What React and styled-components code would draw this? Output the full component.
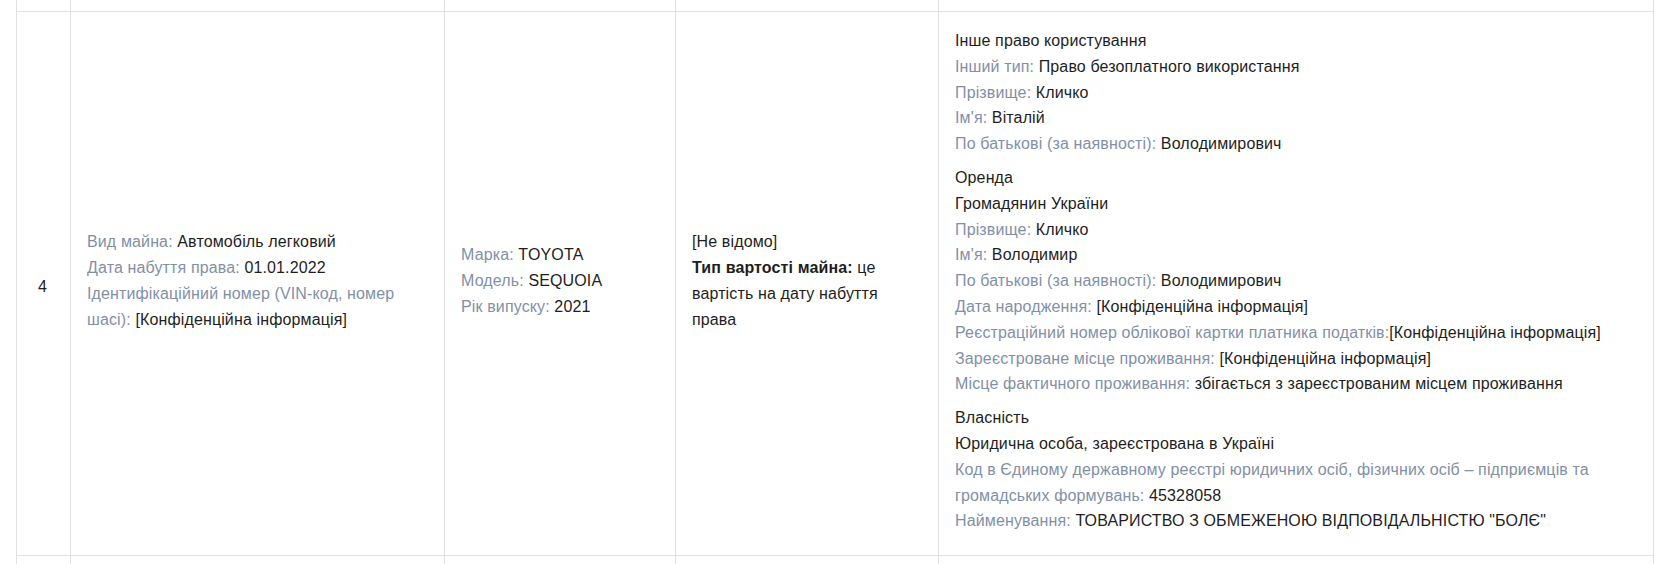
import React from "react";
import styled, { createGlobalStyle } from "styled-components";

const GlobalStyle = createGlobalStyle`
  html, body {
    margin: 0;
    padding: 0;
    background: #fff;
  }
  body {
    font-family: "Liberation Sans", Arial, sans-serif;
    font-size: 16px;
    color: #1e1e1e;
    overflow: hidden;
  }
`;

const columns = [54, 374, 231, 263, 715];

const rightsGroups = [
  [
    { value: "Інше право користування" },
    { label: "Інший тип:", value: "Право безоплатного використання" },
    { label: "Прізвище:", value: "Кличко" },
    { label: "Ім'я:", value: "Віталій" },
    { label: "По батькові (за наявності):", value: "Володимирович" }
  ],
  [
    { value: "Оренда" },
    { value: "Громадянин України" },
    { label: "Прізвище:", value: "Кличко" },
    { label: "Ім'я:", value: "Володимир" },
    { label: "По батькові (за наявності):", value: "Володимирович" },
    { label: "Дата народження:", value: "[Конфіденційна інформація]" },
    {
      label: "Реєстраційний номер облікової картки платника податків:",
      value: "[Конфіденційна інформація]",
      tight: true
    },
    { label: "Зареєстроване місце проживання:", value: "[Конфіденційна інформація]" },
    {
      label: "Місце фактичного проживання:",
      value: "збігається з зареєстрованим місцем проживання"
    }
  ],
  [
    { value: "Власність" },
    { value: "Юридична особа, зареєстрована в Україні" },
    {
      label:
        "Код в Єдиному державному реєстрі юридичних осіб, фізичних осіб – підприємців та громадських формувань:",
      value: "45328058"
    },
    {
      label: "Найменування:",
      value: 'ТОВАРИСТВО З ОБМЕЖЕНОЮ ВІДПОВІДАЛЬНІСТЮ "БОЛЄ"'
    }
  ]
];

const Field = ({ label, value, tight }) => (
  <Line>
    {label && <Label>{label}</Label>}
    {label && !tight ? " " : ""}
    {value}
  </Line>
);

function App() {
  return (
    <Page>
      <GlobalStyle />
      <Table>
        <colgroup>
          {columns.map((w, i) => (
            <col key={i} style={{ width: w }} />
          ))}
        </colgroup>
        <tbody>
          <tr>
            {columns.map((_, i) => (
              <Cell key={i} $empty>
                <Spacer />
              </Cell>
            ))}
          </tr>
          <tr>
            <Cell $center>4</Cell>
            <Cell>
              <Field label="Вид майна:" value="Автомобіль легковий" />
              <Field label="Дата набуття права:" value="01.01.2022" />
              <Field
                label="Ідентифікаційний номер (VIN-код, номер шасі):"
                value="[Конфіденційна інформація]"
              />
            </Cell>
            <Cell>
              <Field label="Марка:" value="TOYOTA" />
              <Field label="Модель:" value="SEQUOIA" />
              <Field label="Рік випуску:" value="2021" />
            </Cell>
            <Cell>
              <Line>[Не відомо]</Line>
              <Line>
                <Strong>Тип вартості майна:</Strong> це вартість на дату
                набуття права
              </Line>
            </Cell>
            <Cell>
              {rightsGroups.map((group, i) => (
                <Group key={i}>
                  {group.map((f, j) => (
                    <Field key={j} {...f} />
                  ))}
                </Group>
              ))}
            </Cell>
          </tr>
          <tr>
            {columns.map((_, i) => (
              <Cell key={i} $empty>
                <Spacer />
              </Cell>
            ))}
          </tr>
        </tbody>
      </Table>
    </Page>
  );
}

const Page = styled.div`
  padding-left: 16px;
  height: 564px;
  overflow: hidden;
`;

const Table = styled.table`
  width: 1638px;
  table-layout: fixed;
  border-collapse: separate;
  border-spacing: 0;
  border-left: 1px solid #e0e1e5;
`;

const Cell = styled.td`
  box-sizing: border-box;
  border-right: 1px solid #e0e1e5;
  border-bottom: 1px solid #e0e1e5;
  vertical-align: middle;
  text-align: ${props => (props.$center ? "center" : "left")};
  padding: ${props =>
    props.$empty ? "0" : props.$center ? "22px 2px 16px 0" : "16px 16px 21px"};
  line-height: 25.8px;
  letter-spacing: 0.13px;
  word-wrap: break-word;
`;

const Spacer = styled.div`
  height: 11px;
`;

const Line = styled.div`
  color: #1e1e1e;
`;

const Label = styled.span`
  color: #8290a6;
`;

const Strong = styled.b`
  font-weight: 700;
  color: #1e1e1e;
`;

const Group = styled.div`
  margin-bottom: 8px;

  &:last-child {
    margin-bottom: 0;
  }
`;

export default App;
